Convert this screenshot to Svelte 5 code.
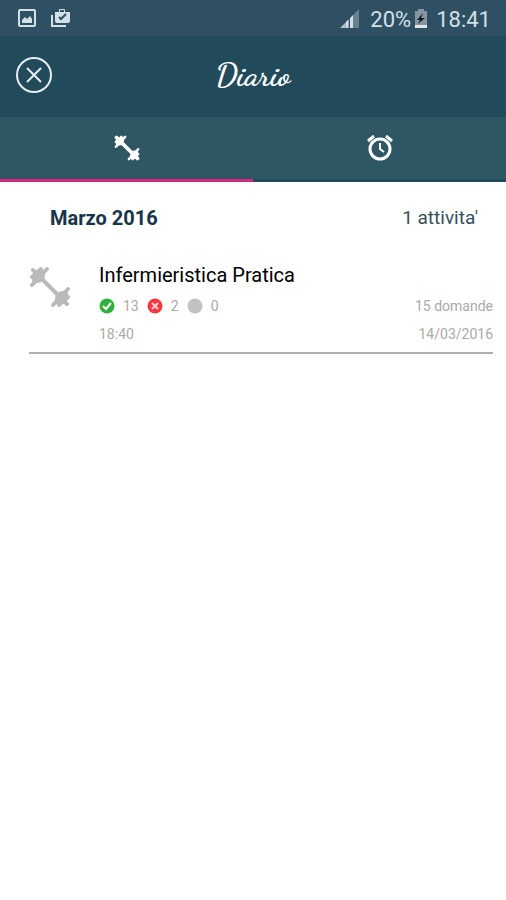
<script lang="ts">
  let activeTab = $state('training')

  const months = [
    {
      name: 'Marzo 2016',
      count: "1 attivita'",
      entries: [
        {
          title: 'Infermieristica Pratica',
          correct: 13,
          wrong: 2,
          skipped: 0,
          questions: '15 domande',
          time: '18:40',
          date: '14/03/2016',
        },
      ],
    },
  ]
</script>

{#snippet dumbbell(size: number, bar: number)}
  <svg width={size} height={size} viewBox="0 0 42 42" fill="currentColor" stroke="currentColor" stroke-linecap="round" stroke-linejoin="round" aria-hidden="true">
    <path d="M4 4 38 38" stroke-width={bar} />
    <path d="M3 11 12 3M3 19 18 3M39 31 30 39M39 23 24 39" stroke-width="4" />
    <path d="M4 12 12 4 15 6 14 12 11 15 5 16ZM38 30 30 38 27 36 28 30 31 27 37 26Z" stroke-width="3" />
  </svg>
{/snippet}

<div class="screen">
  <div class="status">
    <div class="notices">
      <svg width="18" height="18" viewBox="0 0 18 18" aria-hidden="true">
        <rect x="1" y="1" width="16" height="16" rx="1" fill="none" stroke="currentColor" stroke-width="2" />
        <path d="M4 14V11L7 8 9 10 12 7 14 10V14Z" fill="currentColor" />
      </svg>
      <svg width="20" height="20" viewBox="0 0 20 20" aria-hidden="true">
        <path d="M1 7V18H15" fill="none" stroke="currentColor" stroke-width="2" />
        <path d="M4 4H8V2Q8 1 9 1H13Q14 1 14 2V4H19V13Q19 15 17 15H6Q4 15 4 13ZM9 4H13V2H9Z" fill="currentColor" fill-rule="evenodd" />
        <path d="M8 9 10 11 15 6" fill="none" stroke="#2f5062" stroke-width="2" />
      </svg>
    </div>
    <div class="system">
      <svg width="20" height="20" viewBox="0 0 20 20" fill="currentColor" aria-hidden="true">
        <path d="M0 19 5 14V19Z" opacity="0.8" />
        <path d="M5 14 9 10V19H5Z" opacity="0.6" />
        <path d="M6 13 8 11V19H6ZM10 9 13 6V19H10Z" />
        <path d="M13 6 19 0V19H13Z" opacity="0.35" />
      </svg>
      <span class="percent">20%</span>
      <svg class="battery" width="14" height="20" viewBox="0 0 14 20" aria-hidden="true">
        <path d="M4 0H10V2H13V19H1V2H4Z" fill="#8496a1" />
        <path d="M1 16H13V19H1Z" fill="#e1e8ec" />
        <path d="M9 4 3 11H6L4 15 11 9H7Z" fill="#101a20" />
      </svg>
      <span>18:41</span>
    </div>
  </div>

  <header>
    <button class="close" aria-label="Chiudi">
      <svg width="38" height="38" viewBox="0 0 38 38" fill="none" stroke="currentColor" aria-hidden="true">
        <circle cx="19" cy="19" r="17" stroke-width="2" />
        <path d="M12 12 26 26M26 12 12 26" stroke-width="2" />
      </svg>
    </button>
    <h1>Diario</h1>
  </header>

  <nav>
    <button class:active={activeTab === 'training'} aria-label="Allenamento" onclick={() => (activeTab = 'training')}>
      {@render dumbbell(26, 6)}
    </button>
    <button class:active={activeTab === 'timed'} aria-label="A tempo" onclick={() => (activeTab = 'timed')}>
      <svg width="26" height="26" viewBox="0 0 26 26" fill="none" stroke="currentColor" aria-hidden="true">
        <circle cx="13" cy="14" r="10" stroke-width="3" />
        <path d="M1 6 7 1M25 6 19 1" stroke-width="3" />
        <path d="M13 8V14L17 17" stroke-width="2" />
      </svg>
    </button>
  </nav>

  <main>
    {#each months as month}
      <section>
        <div class="month">
          <h2>{month.name}</h2>
          <span>{month.count}</span>
        </div>
        {#each month.entries as entry}
          <article>
            <div class="kind">{@render dumbbell(42, 4)}</div>
            <div class="details">
              <h3>{entry.title}</h3>
              <div class="row">
                <div class="score">
                  <svg width="16" height="16" viewBox="0 0 16 16" aria-hidden="true">
                    <circle cx="8" cy="8" r="7.5" fill="#30b13b" />
                    <path d="M4 8 7 11 12 5" fill="none" stroke="#fff" stroke-width="2" />
                  </svg>
                  <span>{entry.correct}</span>
                  <svg width="16" height="16" viewBox="0 0 16 16" aria-hidden="true">
                    <circle cx="8" cy="8" r="7.5" fill="#f5373f" />
                    <path d="M5 5 11 11M11 5 5 11" stroke="#ffd5d7" stroke-width="2" />
                  </svg>
                  <span>{entry.wrong}</span>
                  <svg width="16" height="16" viewBox="0 0 16 16" aria-hidden="true">
                    <circle cx="8" cy="8" r="7.5" fill="#c2c2c2" />
                  </svg>
                  <span>{entry.skipped}</span>
                </div>
                <span>{entry.questions}</span>
              </div>
              <div class="row">
                <span>{entry.time}</span>
                <span>{entry.date}</span>
              </div>
            </div>
          </article>
        {/each}
      </section>
    {/each}
  </main>
</div>

<style>
  :global(body) {
    margin: 0;
    background: #fff;
  }

  .screen {
    font-family: Roboto, sans-serif;
    color: #000;
  }

  .status {
    display: flex;
    align-items: center;
    justify-content: space-between;
    height: 36px;
    padding: 0 15px 0 18px;
    background: #2f5062;
    color: #d3e0e8;
    font-size: 22px;
  }

  .notices,
  .system {
    display: flex;
    align-items: center;
  }

  .notices {
    gap: 15px;
  }

  .system {
    padding-top: 2px;
  }

  .percent {
    margin-left: 10px;
  }

  .battery {
    margin: 0 8px 0 3px;
  }

  header {
    display: grid;
    grid-template-columns: 38px 1fr 38px;
    align-items: center;
    height: 81px;
    padding: 0 15px 4px;
    background: #214a5a;
    color: #fff;
    box-sizing: border-box;
  }

  button {
    border: 0;
    padding: 0;
    background: none;
    color: #fff;
    cursor: pointer;
  }

  .close {
    display: flex;
    color: #e6eef2;
  }

  h1 {
    margin: 0;
    text-align: center;
    font-family: 'Dancing Script', cursive;
    font-size: 32px;
    font-weight: 700;
    line-height: 36px;
  }

  nav {
    display: flex;
    background: #2f5663;
  }

  nav button {
    display: flex;
    flex: 1;
    align-items: center;
    justify-content: center;
    height: 65px;
    border-bottom: 3px solid #204a5d;
  }

  nav button.active {
    border-bottom-color: #d9267a;
  }

  .month {
    display: flex;
    align-items: center;
    justify-content: space-between;
    padding: 24px 28px 24px 50px;
    font-size: 19px;
    line-height: 24px;
    color: #34505c;
  }

  h2 {
    margin: 0;
    font-size: 20px;
    font-weight: 700;
    color: #17344a;
  }

  article {
    display: flex;
    gap: 28px;
    margin: 0 13px 0 29px;
    padding: 8px 0 4px;
    border-bottom: 2px solid #b0b0b0;
  }

  .kind {
    padding-top: 4px;
    color: #bababa;
  }

  .details {
    flex: 1;
  }

  h3 {
    margin: 0 0 4px;
    font-size: 20px;
    font-weight: 400;
    line-height: 26px;
  }

  .row,
  .score {
    display: flex;
    align-items: center;
  }

  .row {
    justify-content: space-between;
    height: 28px;
    font-size: 14px;
    color: #aaa;
  }

  .score span {
    margin: 0 8px;
  }

  svg {
    display: block;
  }
</style>
